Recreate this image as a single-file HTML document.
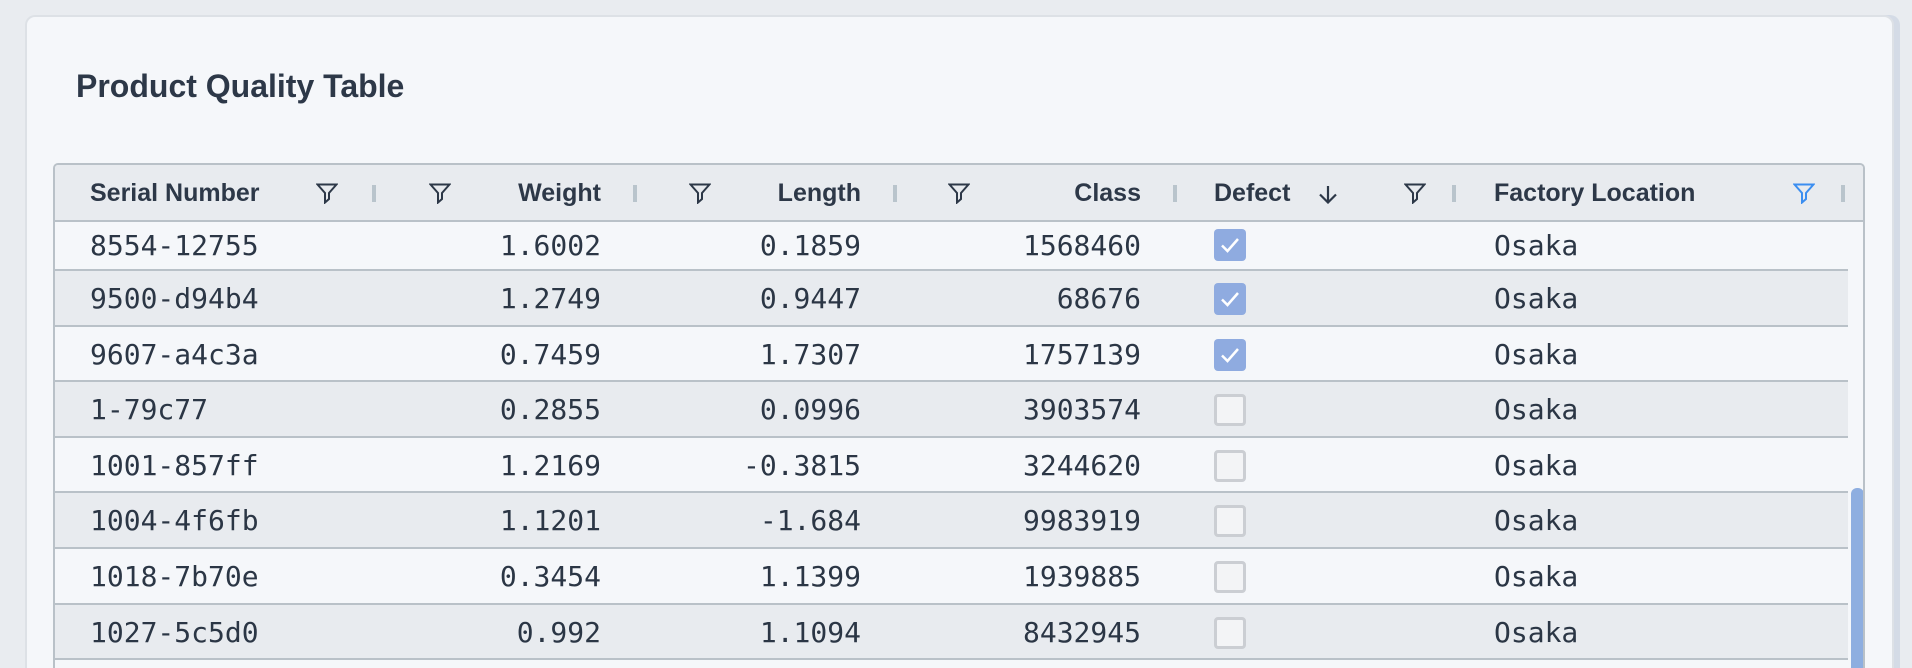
<!DOCTYPE html>
<html><head><meta charset="utf-8"><style>
*{margin:0;padding:0;box-sizing:border-box}
html,body{width:1912px;height:668px;overflow:hidden}
body{background:#e9ecf0;position:relative;font-family:"Liberation Sans",sans-serif;color:#2b3645}
.card{position:absolute;left:25px;top:15px;width:1869px;height:653px;background:#f5f7fa;border:2px solid #dde1e6;border-bottom:none;border-radius:10px 10px 0 0;box-shadow:6px 0 0 #d4dbe6}
.title{position:absolute;left:76px;top:68px;font-size:32px;font-weight:bold;color:#2d3848}
.tbl{position:absolute;left:53px;top:163px;width:1812px;height:505px;border:2px solid #b9c1c8;border-bottom:none;border-radius:5px 5px 0 0;background:#f5f7fa;overflow:hidden}
.hdr{position:absolute;left:0;top:0;width:100%;height:57px;background:#e8ebef;border-bottom:2px solid #b9c1c8}
.h{position:absolute;top:14px;font-size:25px;font-weight:bold;color:#2d3848;white-space:nowrap}
.f{position:absolute;top:18px;width:22px;height:21px}
.s{position:absolute;top:20px;width:4px;height:17px;background:#b9c4cc}
.row{position:absolute;left:0;width:1793px;border-bottom:2px solid #b9c1c8}
.row.g{background:#e8ebef}
.c{position:absolute;font-family:"DejaVu Sans Mono","Liberation Mono",monospace;font-size:28px;line-height:33px;color:#2b3645;white-space:nowrap}
.r{text-align:right}
.cb{position:absolute;left:1159px;width:32px;height:32px;border-radius:4px}
.cb.on{background:#8fabe0}
.cb.off{background:#f3f4f6;border:3px solid #cbced3}
.sb{position:absolute;left:1796px;top:323px;width:13px;height:182px;background:#8eaee0;border-radius:6px 6px 0 0}
</style></head><body>
<div class="card"></div>
<div class="title">Product Quality Table</div>
<div class="tbl">
<div class="hdr">
<div class="h" style="left:35px">Serial Number</div>
<svg class="f" style="left:261px" viewBox="0 0 22 21"><path d="M1.5 1.5H20.5L13 10V16L9 19.5V10Z" fill="none" stroke="#2d3848" stroke-width="2"/></svg>
<div class="s" style="left:317px"></div>
<svg class="f" style="left:374px" viewBox="0 0 22 21"><path d="M1.5 1.5H20.5L13 10V16L9 19.5V10Z" fill="none" stroke="#2d3848" stroke-width="2"/></svg>
<div class="h r" style="right:1262px">Weight</div>
<div class="s" style="left:578px"></div>
<svg class="f" style="left:634px" viewBox="0 0 22 21"><path d="M1.5 1.5H20.5L13 10V16L9 19.5V10Z" fill="none" stroke="#2d3848" stroke-width="2"/></svg>
<div class="h r" style="right:1002px">Length</div>
<div class="s" style="left:838px"></div>
<svg class="f" style="left:893px" viewBox="0 0 22 21"><path d="M1.5 1.5H20.5L13 10V16L9 19.5V10Z" fill="none" stroke="#2d3848" stroke-width="2"/></svg>
<div class="h r" style="right:722px">Class</div>
<div class="s" style="left:1118px"></div>
<div class="h" style="left:1159px">Defect</div>
<svg style="position:absolute;left:1262px;top:20px" width="22" height="19" viewBox="0 0 22 19"><path d="M11 1V17M3 9.5L11 17.5L19 9.5" fill="none" stroke="#2d3848" stroke-width="2.2"/></svg>
<svg class="f" style="left:1349px" viewBox="0 0 22 21"><path d="M1.5 1.5H20.5L13 10V16L9 19.5V10Z" fill="none" stroke="#2d3848" stroke-width="2"/></svg>
<div class="s" style="left:1397px"></div>
<div class="h" style="left:1439px">Factory Location</div>
<svg class="f" style="left:1738px" viewBox="0 0 22 21"><path d="M1.5 1.5H20.5L13 10V16L9 19.5V10Z" fill="none" stroke="#3b8ef0" stroke-width="2"/></svg>
<div class="s" style="left:1786px"></div>
</div>
<div class="row" style="top:57px;height:49px"></div>
<div class="row g" style="top:106px;height:55.6px"></div>
<div class="row" style="top:161.6px;height:55.6px"></div>
<div class="row g" style="top:217.2px;height:55.6px"></div>
<div class="row" style="top:272.8px;height:55.6px"></div>
<div class="row g" style="top:328.4px;height:55.6px"></div>
<div class="row" style="top:384px;height:55.6px"></div>
<div class="row g" style="top:439.6px;height:55.6px"></div>

<div class="c" style="left:35px;top:64px">8554-12755</div>
<div class="c" style="left:35px;top:117px">9500-d94b4</div>
<div class="c" style="left:35px;top:172.6px">9607-a4c3a</div>
<div class="c" style="left:35px;top:228.2px">1-79c77</div>
<div class="c" style="left:35px;top:283.8px">1001-857ff</div>
<div class="c" style="left:35px;top:339.4px">1004-4f6fb</div>
<div class="c" style="left:35px;top:395px">1018-7b70e</div>
<div class="c" style="left:35px;top:450.6px">1027-5c5d0</div>

<div class="c r" style="right:1262px;top:64px">1.6002</div>
<div class="c r" style="right:1262px;top:117px">1.2749</div>
<div class="c r" style="right:1262px;top:172.6px">0.7459</div>
<div class="c r" style="right:1262px;top:228.2px">0.2855</div>
<div class="c r" style="right:1262px;top:283.8px">1.2169</div>
<div class="c r" style="right:1262px;top:339.4px">1.1201</div>
<div class="c r" style="right:1262px;top:395px">0.3454</div>
<div class="c r" style="right:1262px;top:450.6px">0.992</div>

<div class="c r" style="right:1002px;top:64px">0.1859</div>
<div class="c r" style="right:1002px;top:117px">0.9447</div>
<div class="c r" style="right:1002px;top:172.6px">1.7307</div>
<div class="c r" style="right:1002px;top:228.2px">0.0996</div>
<div class="c r" style="right:1002px;top:283.8px">-0.3815</div>
<div class="c r" style="right:1002px;top:339.4px">-1.684</div>
<div class="c r" style="right:1002px;top:395px">1.1399</div>
<div class="c r" style="right:1002px;top:450.6px">1.1094</div>

<div class="c r" style="right:722px;top:64px">1568460</div>
<div class="c r" style="right:722px;top:117px">68676</div>
<div class="c r" style="right:722px;top:172.6px">1757139</div>
<div class="c r" style="right:722px;top:228.2px">3903574</div>
<div class="c r" style="right:722px;top:283.8px">3244620</div>
<div class="c r" style="right:722px;top:339.4px">9983919</div>
<div class="c r" style="right:722px;top:395px">1939885</div>
<div class="c r" style="right:722px;top:450.6px">8432945</div>

<div class="cb on" style="top:64px"><svg width="32" height="32" viewBox="0 0 32 32"><path d="M8 16.5L13.5 22L24 10" fill="none" stroke="#fff" stroke-width="2.5"/></svg></div>
<div class="cb on" style="top:118px"><svg width="32" height="32" viewBox="0 0 32 32"><path d="M8 16.5L13.5 22L24 10" fill="none" stroke="#fff" stroke-width="2.5"/></svg></div>
<div class="cb on" style="top:173.6px"><svg width="32" height="32" viewBox="0 0 32 32"><path d="M8 16.5L13.5 22L24 10" fill="none" stroke="#fff" stroke-width="2.5"/></svg></div>
<div class="cb off" style="top:229.2px"></div>
<div class="cb off" style="top:284.8px"></div>
<div class="cb off" style="top:340.4px"></div>
<div class="cb off" style="top:396px"></div>
<div class="cb off" style="top:451.6px"></div>

<div class="c" style="left:1439px;top:64px">Osaka</div>
<div class="c" style="left:1439px;top:117px">Osaka</div>
<div class="c" style="left:1439px;top:172.6px">Osaka</div>
<div class="c" style="left:1439px;top:228.2px">Osaka</div>
<div class="c" style="left:1439px;top:283.8px">Osaka</div>
<div class="c" style="left:1439px;top:339.4px">Osaka</div>
<div class="c" style="left:1439px;top:395px">Osaka</div>
<div class="c" style="left:1439px;top:450.6px">Osaka</div>

<div class="sb"></div>
</div>
</body></html>
